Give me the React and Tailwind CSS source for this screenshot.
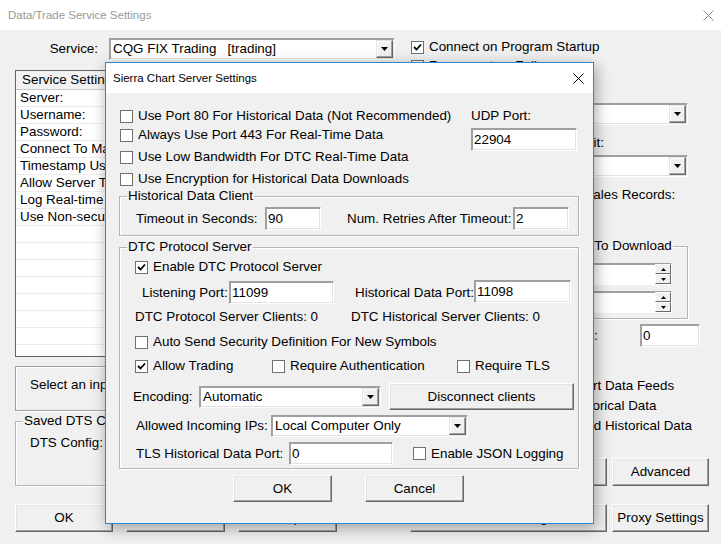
import React from "react";

// Classic Win32 dialog widgets
function Check({ checked, children, className = "" }) {
  return (
    <div className={`flex h-[18px] shrink-0 items-center gap-[5px] ${className}`}>
      <span className="flex h-[13px] w-[13px] shrink-0 items-center justify-center border border-[#707070] bg-white">
        {checked && (
          <svg width="9" height="9" viewBox="0 0 9 9">
            <path d="M1 4 L3.5 6.5 L8 1.5" fill="none" stroke="#000" strokeWidth="1.8" />
          </svg>
        )}
      </span>
      <span className="whitespace-nowrap">{children}</span>
    </div>
  );
}

function Label({ children, className = "" }) {
  return <span className={`shrink-0 whitespace-nowrap ${className}`}>{children}</span>;
}

function Edit({ value, className = "" }) {
  return (
    <div
      className={`flex h-[23px] shrink-0 items-center border border-t-[#a0a0a0] border-l-[#a0a0a0] border-r-white border-b-white bg-white pl-[2px] shadow-[inset_1px_1px_0_#a0a0a0,inset_-1px_-1px_0_#e3e3e3] ${className}`}
    >
      {value}
    </div>
  );
}

function Arrow() {
  return (
    <svg width="7" height="4" viewBox="0 0 7 4">
      <path d="M0 0 H7 L3.5 4 Z" fill="#000" />
    </svg>
  );
}

function Combo({ value, className = "" }) {
  return (
    <div
      className={`flex h-[22px] shrink-0 items-center border border-t-[#a0a0a0] border-l-[#a0a0a0] border-r-white border-b-white bg-white pl-[3px] shadow-[inset_1px_1px_0_#a0a0a0,inset_-1px_-1px_0_#e3e3e3] ${className}`}
    >
      <span className="flex-1 truncate whitespace-pre">{value}</span>
      <span className="mr-[1px] flex h-[18px] w-[17px] items-center justify-center border border-t-[#e3e3e3] border-l-[#e3e3e3] border-r-[#696969] border-b-[#696969] bg-[#f0f0f0] shadow-[inset_-1px_-1px_0_#a0a0a0,inset_1px_1px_0_#fff]">
        <Arrow />
      </span>
    </div>
  );
}

function Button({ children, className = "" }) {
  return (
    <div
      className={`flex shrink-0 items-center justify-center whitespace-nowrap border border-t-white border-l-white border-r-[#696969] border-b-[#696969] bg-[#f0f0f0] shadow-[inset_-1px_-1px_0_#a0a0a0,inset_1px_1px_0_#e3e3e3] ${className}`}
    >
      {children}
    </div>
  );
}

function Group({ title, children, className = "", legendClass = "ml-[7px]" }) {
  return (
    <fieldset
      className={`shrink-0 border border-[#b4b4b4] shadow-[inset_1px_1px_0_#fff,1px_1px_0_#fff] ${className}`}
    >
      <legend className={`whitespace-nowrap px-[1px] leading-[16px] ${legendClass}`}>{title}</legend>
      {children}
    </fieldset>
  );
}

function Spin() {
  return (
    <div className="flex h-[22px] w-[257px] items-center border border-t-[#a0a0a0] border-l-[#a0a0a0] border-r-white border-b-white bg-white shadow-[inset_1px_1px_0_#a0a0a0]">
      <div className="flex-1" />
      <div className="flex h-[20px] w-[16px] flex-col">
        <span className="flex flex-1 items-center justify-center border border-t-white border-l-white border-r-[#696969] border-b-[#696969] bg-[#f0f0f0]">
          <svg width="5" height="3" viewBox="0 0 5 3"><path d="M0 3 H5 L2.5 0 Z" fill="#000" /></svg>
        </span>
        <span className="flex flex-1 items-center justify-center border border-t-white border-l-white border-r-[#696969] border-b-[#696969] bg-[#f0f0f0]">
          <svg width="5" height="3" viewBox="0 0 5 3"><path d="M0 0 H5 L2.5 3 Z" fill="#000" /></svg>
        </span>
      </div>
    </div>
  );
}

function CloseX({ color }) {
  return (
    <svg width="11" height="11" viewBox="0 0 11 11">
      <path d="M0.5 0.5 L10.5 10.5 M10.5 0.5 L0.5 10.5" stroke={color} strokeWidth="1" />
    </svg>
  );
}

const listRows = [
  "Server:",
  "Username:",
  "Password:",
  "Connect To Market Data Server:",
  "Timestamp Using Local Time:",
  "Allow Server To Send Trade Updates:",
  "Log Real-time Data:",
  "Use Non-secure Connection:",
  "", "", "", "", "", "", "", "",
];

function ServerSettingsDialog() {
  return (
    <div className="absolute left-[105px] top-[62px] flex h-[462px] w-[489px] flex-col border border-[#2b86d6] bg-[#f0f0f0] shadow-[2px_4px_14px_rgba(0,0,0,0.35)]">
      <div className="flex h-[30px] shrink-0 items-center justify-between bg-white pl-[7px] pr-[9px] text-[11.5px] text-black">
        <span>Sierra Chart Server Settings</span>
        <CloseX color="#000" />
      </div>

      <div className="flex shrink-0 flex-col pl-[13px] pr-[14px]">
        <div className="flex pt-[14px]">
          <div className="flex w-[352px] shrink-0 flex-col pl-[1px]">
            <Check>Use Port 80 For Historical Data (Not Recommended)</Check>
            <Check className="mt-[1px]">Always Use Port 443 For Real-Time Data</Check>
            <Check className="mt-[4px]">Use Low Bandwidth For DTC Real-Time Data</Check>
            <Check className="mt-[4px]">Use Encryption for Historical Data Downloads</Check>
          </div>
          <div className="flex flex-col">
            <div className="h-[18px] leading-[18px]">UDP Port:</div>
            <Edit value="22904" className="mt-[3px] w-[106px]" />
          </div>
        </div>

        <Group title="Historical Data Client" className="w-[460px] pb-[5px]">
          <div className="mt-[3px] flex items-center pl-[16px]">
            <Label className="w-[129px]">Timeout in Seconds:</Label>
            <Edit value="90" className="w-[56px]" />
            <Label className="ml-[26px] w-[166px]">Num. Retries After Timeout:</Label>
            <Edit value="2" className="w-[56px]" />
          </div>
        </Group>

        <Group title="DTC Protocol Server" className="mt-[3px] w-[460px] pb-[3px]">
          <div className="flex flex-col pl-[15px]">
            <Check checked className="mt-[3px]">Enable DTC Protocol Server</Check>
            <div className="mt-[5px] flex items-center">
              <Label className="ml-[7px] w-[87px]">Listening Port:</Label>
              <Edit value="11099" className="w-[105px]" />
              <Label className="ml-[21px] w-[119px]">Historical Data Port:</Label>
              <Edit value="11098" className="-mt-[2px] w-[97px]" />
            </div>
            <div className="mt-[4px] flex h-[18px] items-center">
              <Label className="w-[216px]">DTC Protocol Server Clients: 0</Label>
              <Label>DTC Historical Server Clients: 0</Label>
            </div>
            <Check className="mt-[7px]">Auto Send Security Definition For New Symbols</Check>
            <div className="mt-[6px] flex">
              <Check checked className="w-[137px]">Allow Trading</Check>
              <Check className="w-[185px]">Require Authentication</Check>
              <Check>Require TLS</Check>
            </div>
            <div className="mt-[8px] flex h-[27px] items-center">
              <Label className="-ml-[2px] w-[66px]">Encoding:</Label>
              <Combo value="Automatic" className="w-[182px]" />
              <Button className="ml-[8px] h-[27px] w-[185px]">Disconnect clients</Button>
            </div>
            <div className="mt-[5px] flex items-center">
              <Label className="ml-[1px] w-[135px]">Allowed Incoming IPs:</Label>
              <Combo value="Local Computer Only" className="w-[197px]" />
            </div>
            <div className="mt-[5px] flex items-center">
              <Label className="ml-[1px] w-[153px]">TLS Historical Data Port:</Label>
              <Edit value="0" className="w-[104px]" />
              <Check className="ml-[20px]">Enable JSON Logging</Check>
            </div>
          </div>
        </Group>
      </div>

      <div className="mt-[6px] flex shrink-0 justify-center gap-[33px] pr-[2px]">
        <Button className="h-[27px] w-[99px]">OK</Button>
        <Button className="h-[27px] w-[99px]">Cancel</Button>
      </div>
    </div>
  );
}

export default function App() {
  return (
    <div className="relative h-[544px] w-[721px] overflow-hidden bg-[#f0f0f0] font-['Liberation_Sans',Arial,sans-serif] text-[13.4px] leading-[18px] text-black">
      {/* Main window title bar (inactive) */}
      <div className="flex h-[30px] items-center justify-between bg-white pl-[8px] pr-[7px] text-[11.5px] text-[#999]">
        <span>Data/Trade Service Settings</span>
        <CloseX color="#8c8c8c" />
      </div>

      {/* Main window body */}
      <div className="flex flex-col px-[15px] pt-[8px]">
        <div className="flex">
          {/* Left column */}
          <div className="flex w-[380px] shrink-0 flex-col">
            <div className="flex h-[22px] items-center">
              <Label className="w-[94px] pr-[11px] text-right">Service:</Label>
              <Combo value={"CQG FIX Trading   [trading]"} className="w-[286px]" />
            </div>
            <div className="mt-[10px] flex h-[287px] flex-col overflow-hidden border border-[#646464] bg-white">
              <div className="flex h-[19px] shrink-0 items-center border-b border-[#c8c8c8] bg-[#f2f2f2] pl-[6px]">
                Service Settings
              </div>
              {listRows.map((r, i) => (
                <div key={i} className="flex h-[17px] shrink-0 items-center whitespace-nowrap border-b border-[#ececec] pl-[4px]">
                  {r}
                </div>
              ))}
            </div>
            <div className="mt-[9px] flex h-[45px] items-start whitespace-nowrap border border-[#a0a0a0] pl-[14px] pt-[9px] shadow-[inset_1px_1px_0_#fff,1px_1px_0_#fff]">
              Select an input field above to see its description.
            </div>
            <Group title="Saved DTS Config" className="mt-[2px] h-[73px] w-[380px]">
              <div className="mt-[5px] flex items-center pl-[14px]">
                <Label>DTS Config:</Label>
              </div>
            </Group>
          </div>

          {/* Right column */}
          <div className="ml-[16px] flex w-[298px] shrink-0 flex-col">
            <Check checked>Connect on Program Startup</Check>
            <Check className="mt-[1px]">Reconnect on Failure</Check>
            <Label className="mt-[2px] h-[18px]">Intraday Data Source:</Label>
            <Combo value="" className="mt-[8px] w-[277px]" />
            <Label className="-ml-[2px] mt-[9px] h-[18px]">Intraday Data Storage Time Unit:</Label>
            <Combo value="" className="mt-[3px] w-[277px]" />
            <Label className="ml-[32px] mt-[9px] h-[18px]">Days to Load Time and Sales Records:</Label>
            <Group
              title="Default Number of Days To Download"
              legendClass="ml-[35px]"
              className="mt-[34px] w-[277px] pb-[5px]"
            >
              <div className="flex flex-col pl-[3px]">
                <div className="mt-[9px]">
                  <Spin />
                </div>
                <div className="mt-[6px]">
                  <Spin />
                </div>
              </div>
            </Group>
            <div className="mt-[5px] flex items-center">
              <Label className="ml-[36px] w-[193px]">Max Chart Data Records:</Label>
              <Edit value="0" className="h-[22px] w-[60px]" />
            </div>
            <div className="mt-[30px] flex flex-col gap-[2px] whitespace-nowrap">
              <Label className="ml-[22px]">Use Intraday Data For Chart Data Feeds</Label>
              <Label className="ml-[43px]">Download Intraday Historical Data</Label>
              <Label className="ml-[80px]">Store Downloaded Historical Data</Label>
            </div>
            <div className="mt-[23px] flex gap-[5px]">
              <Button className="h-[28px] w-[196px]">Symbol Settings</Button>
              <Button className="h-[28px] w-[97px]">Advanced</Button>
            </div>
          </div>
        </div>

        {/* Bottom button row */}
        <div className="mt-[18px] flex gap-[13px]">
          <Button className="h-[28px] w-[98px]">OK</Button>
          <Button className="h-[28px] w-[99px]">Cancel</Button>
          <Button className="h-[28px] w-[99px]">Help</Button>
          <Button className="ml-[60px] h-[28px] w-[197px]">Server Settings</Button>
          <Button className="-ml-[8px] h-[28px] w-[97px]">Proxy Settings</Button>
        </div>
      </div>

      <ServerSettingsDialog />
    </div>
  );
}
